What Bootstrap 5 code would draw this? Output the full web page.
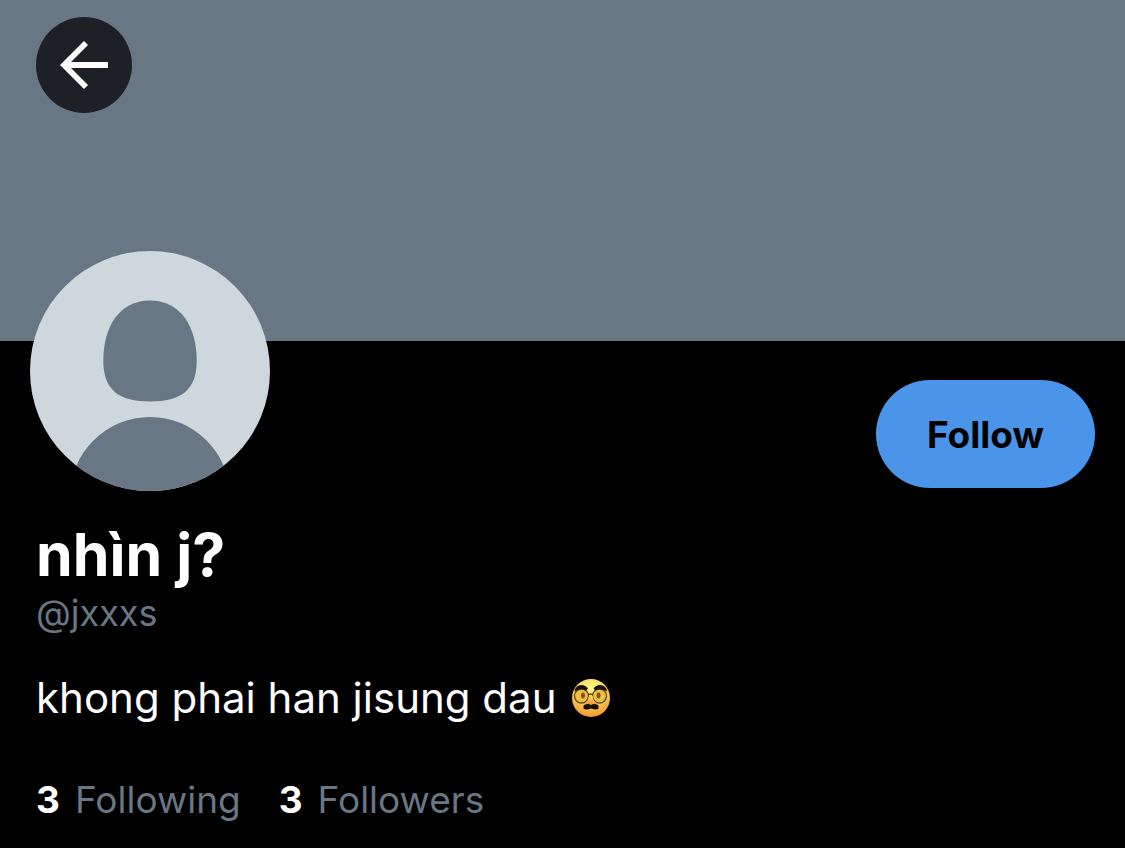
<!DOCTYPE html>
<html lang="vi">
<head>
<meta charset="utf-8">
<meta name="viewport" content="width=device-width, initial-scale=1">
<title>nhìn j? (@jxxxs)</title>
<link href="https://cdn.jsdelivr.net/npm/bootstrap@5.3.0/dist/css/bootstrap.min.css" rel="stylesheet">
<style>
body{background:#000;color:#fff;font-family:Inter,"Liberation Sans",sans-serif}
.banner{background:#697684;height:341px;padding:17px 36px}
.back-btn{width:96px;height:96px;background:#1d2025;color:#fff}
.back-btn:hover{background:#2b3036;color:#fff}
.profile-top{padding:0 30px;height:150px}
.avatar{width:240px;height:240px;margin-top:-90px}
.follow-btn{height:108px;margin-top:39px;padding:2px 51px 0;background:#4a94ea;color:#000;font-size:37px;font-weight:700}
.follow-btn:hover{background:#3d86da;color:#000}
.details{padding:28px 36px 24px}
.display-name{font-size:59px;line-height:72px;font-weight:700}
.muted{color:#697684}
.handle{font-size:36px;line-height:44px}
.bio{font-size:42px;line-height:52px;margin-top:37px;gap:14px}
.emoji{width:40px;height:40px}
.stats{font-size:37px;line-height:44px;margin-top:54px;gap:38px}
.stats a{color:#fff;gap:15px}
</style>
</head>
<body>
<header class="banner">
<button type="button" class="btn back-btn rounded-circle border-0 p-0 d-flex align-items-center justify-content-center" aria-label="Back">
<svg width="50" height="50" viewBox="0 0 50 50" fill="currentColor" aria-hidden="true"><path d="M25 1l4 4-17 17h37v6H12l17 17-4 4L1 25z"/></svg>
</button>
</header>
<main>
<div class="profile-top d-flex justify-content-between align-items-start">
<svg class="avatar" viewBox="0 0 240 240" role="img" aria-label="Profile picture">
<defs><clipPath id="disc"><circle cx="120" cy="120" r="120"/></clipPath></defs>
<g clip-path="url(#disc)">
<path fill="#ced7dc" d="M0 0h240v240H0z"/>
<path fill="#697684" d="M120 49.500C151 49.500 166.700 76 166.700 110C166.700 139 151 150.500 120 150.500C89 150.500 73.300 139 73.300 110C73.300 76 89 49.500 120 49.500z"/>
<circle cx="120" cy="246" r="80" fill="#697684"/>
</g>
</svg>
<button type="button" class="btn follow-btn rounded-pill border-0">Follow</button>
</div>
<section class="details">
<h1 class="display-name m-0">nhìn j?</h1>
<div class="handle muted">@jxxxs</div>
<p class="bio mb-0 d-flex align-items-center">khong phai han jisung dau
<svg class="emoji" viewBox="0 0 40 40" role="img" aria-label="Disguised face">
<defs>
<radialGradient id="skin" cx=".5" cy=".25" r=".8"><stop offset="0" stop-color="#fff68c"/><stop offset=".5" stop-color="#fdd45a"/><stop offset="1" stop-color="#ec8f2c"/></radialGradient>
<linearGradient id="nose" x2="0" y2="1"><stop offset="0" stop-color="#fbd65a"/><stop offset="1" stop-color="#ee9140"/></linearGradient>
</defs>
<circle cx="20" cy="20" r="19" fill="url(#skin)"/>
<g fill="#edc23f" stroke="#5c4b27" stroke-width="1.300"><circle cx="10.500" cy="18" r="7"/><circle cx="28.500" cy="18" r="7"/><path fill="none" d="M17 17q2.500-2 5 0"/></g>
<ellipse cx="12" cy="17.500" rx="2" ry="3" fill="#855020"/><ellipse cx="27.500" cy="17.500" rx="2" ry="3" fill="#855020"/>
<path fill="url(#nose)" d="M18 18h3.500l1.500 5q3 1 2 4H14.500q-1-3 2-4z"/>
<path fill="#17110d" d="M3.500 13.500q1-6.500 7-6.500 4 0 6.500 3.500l-2 2q-5-3-11.500 1zM36 13.500Q35 7 29 7q-4 0-6.500 3.500l2 2q5-3 11.500 1zM12.500 30.500v-3q1-1.500 4-1.500 2 0 3.500 1 1.500-1 3.500-1 3 0 4 1.500v3q-1 1-3 1-2 0-4.500-1-2.500 1-4.500 1-2 0-3-1z"/>
</svg></p>
<nav class="stats d-flex" aria-label="Connections"><a href="#following" class="d-flex text-decoration-none"><strong>3</strong><span class="muted">Following</span></a><a href="#followers" class="d-flex text-decoration-none"><strong>3</strong><span class="muted">Followers</span></a></nav>
</section>
</main>
<script src="https://cdn.jsdelivr.net/npm/bootstrap@5.3.0/dist/js/bootstrap.bundle.min.js"></script>
</body>
</html>
